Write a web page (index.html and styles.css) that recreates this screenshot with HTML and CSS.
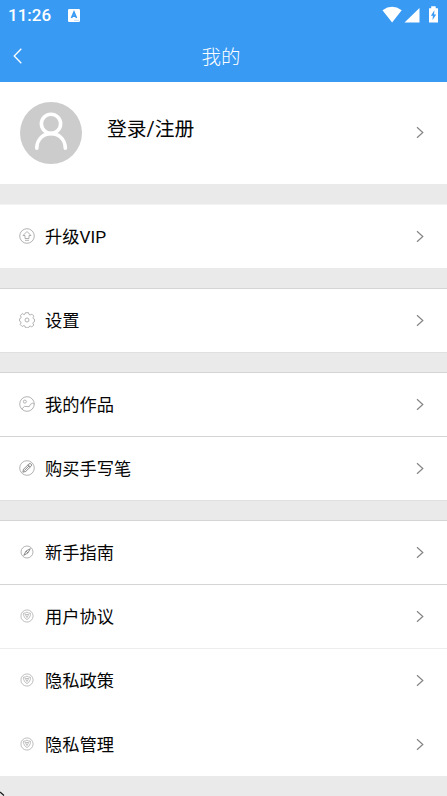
FILE: index.html
```html
<!DOCTYPE html>
<html lang="zh-CN">
<head>
<meta charset="utf-8">
<title>我的</title>
<link rel="stylesheet" href="styles.css">
</head>
<body>
<svg class="defs" width="0" height="0">
  <symbol id="chevron" viewBox="0 0 8 12"><path d="M1 .8 6.800 6 1 11.200"/></symbol>
  <symbol id="shield" viewBox="0 0 16 16"><circle cx="8" cy="8" r="6.100"/><path d="M8 4.100 9.500 5h1.800v2.600Q10.700 10 8 11.600 5.300 10 4.700 7.600V5h1.800z"/><path d="M6.300 6.500h3.400L8 9.500z"/></symbol>
</svg>
<header class="top">
  <div class="status">
    <span class="time">11:26</span>
    <svg class="app" width="12" height="13" viewBox="0 0 12 13"><rect width="12" height="13" rx="1.200" fill="#fff"/><path d="M3.500 9 6 3.200 8.500 9M4.500 7.200h3" fill="none" stroke="#389af3" stroke-width="1.700"/><path d="M6 11.300h5" stroke="#a5d2fa" stroke-width=".7"/></svg>
    <svg class="signals" width="58" height="18" viewBox="0 0 58 18" fill="#fff"><path d="M.5 4.200Q10 -2.700 19.700 4.200L10.100 16.400z"/><path d="M37.500 2v14.500H22.500z"/><path d="M47 2.200h2.200V.2h4.500v2H56v14.300h-9z"/><path d="M52.400 4.300 48.900 9.800h2l-.4 4.200 3.700-5.600h-2.100z" fill="#389af3"/></svg>
  </div>
  <div class="nav">
    <svg class="back" width="10" height="16" viewBox="0 0 10 16"><path d="M8.300 .8 1.200 8 8.300 15.200"/></svg>
    <h1>我的</h1>
  </div>
</header>
<main>
  <section class="profile">
    <svg class="avatar" width="62" height="62" viewBox="0 0 62 62"><circle cx="31" cy="31" r="31" fill="#ccc"/><g fill="none" stroke="#fff" stroke-width="3.600" stroke-linecap="round"><circle cx="31" cy="21.800" r="9.600"/><path d="M16.800 46.200C17 26.800 45 26.800 45.300 46.200"/></g></svg>
    <span class="login">登录/注册</span>
    <svg class="chev"><use href="#chevron"/></svg>
  </section>
  <section class="group">
    <div class="row soft"><svg class="ico" viewBox="0 0 16 16"><circle cx="8" cy="8" r="7.300"/><path d="M8 3.500 12 7.500H10V10.500H6V7.500H4zM6 12.300h4"/></svg><span>升级VIP</span><svg class="chev"><use href="#chevron"/></svg></div>
  </section>
  <section class="group">
    <div class="row"><svg class="ico" viewBox="0 0 16 16"><circle cx="8" cy="8" r="2"/><path d="M6.500.7h3l.5 1.800 1.200.5 1.700-.9 2 2-.9 1.700.4 1 1.100.4v2.500l-1.200.6-.4 1.200.9 1.500-2 2-1.500-.9-1.300.5-.5 1.200h-3L6 14.100l-1.200-.5-1.600.9-2-2 .9-1.600-.5-1.200L.6 9.200V6.700l1.100-.5.5-1.100-.9-1.600 2-1.900 1.500.9L6 2.100z"/></svg><span>设置</span><svg class="chev"><use href="#chevron"/></svg></div>
  </section>
  <section class="group edged">
    <div class="row"><svg class="ico" viewBox="0 0 16 16"><circle cx="8" cy="8" r="7.300"/><circle cx="5.800" cy="5.600" r="1.500"/><path d="M2.800 13Q5.500 9 8 10.500T11.500 8.300Q13.500 6.300 15.200 8"/></svg><span>我的作品</span><svg class="chev"><use href="#chevron"/></svg></div>
    <div class="row"><svg class="ico" viewBox="0 0 16 16"><circle cx="8" cy="8" r="7.300"/><path class="dark" d="M3.800 12.200 4.600 9.200 9.900 3.900Q11.200 3.100 12.300 4.200 13 5.200 12.100 6.200L6.800 11.400zM9 4.800l2.200 2.300M5.300 10.500 10.200 5.800"/></svg><span>购买手写笔</span><svg class="chev"><use href="#chevron"/></svg></div>
  </section>
  <section class="group edged">
    <div class="row"><svg class="ico" viewBox="0 0 16 16"><circle cx="8" cy="8" r="6"/><path class="dark" d="M11.300 4.700 8.900 9 7 7.100zM7 7.100 4.800 11.300 8.900 9"/></svg><span>新手指南</span><svg class="chev"><use href="#chevron"/></svg></div>
    <div class="row"><svg class="ico pale"><use href="#shield"/></svg><span>用户协议</span><svg class="chev"><use href="#chevron"/></svg></div>
    <div class="row faint"><svg class="ico pale"><use href="#shield"/></svg><span>隐私政策</span><svg class="chev"><use href="#chevron"/></svg></div>
    <div class="row plain"><svg class="ico pale"><use href="#shield"/></svg><span>隐私管理</span><svg class="chev"><use href="#chevron"/></svg></div>
  </section>
</main>
<svg class="corner" width="5" height="5" viewBox="0 0 5 5"><path d="M0 1 4 4.500" fill="none" stroke="#111" stroke-width="1.200"/></svg>
</body>
</html>
```
FILE: styles.css
```css
* { box-sizing: border-box; }
body {
  margin: 0;
  height: 796px;
  overflow: hidden;
  position: relative;
  background: #eaeaea;
  color: #050505;
  font-family: Roboto, "Noto Sans CJK SC", sans-serif;
}
.defs { position: absolute; }
svg { flex: none; }
.top { height: 82px; background: #389af3; color: #fff; }
.status { height: 30px; display: flex; align-items: center; padding: 0 7px 0 8px; }
.time { font-size: 17px; font-weight: 500; line-height: 30px; width: 60px; }
.app { margin-top: 1px; }
.signals { margin-left: auto; }
.nav { height: 52px; display: flex; align-items: center; padding: 0 12px 0 13px; }
.back { fill: none; stroke: #fff; stroke-width: 1.3; }
h1 { flex: 1; margin: 3px 16px 0 0; text-align: center; font-size: 19.5px; line-height: 50px; font-weight: 300; }
.profile { height: 102px; background: #fff; display: flex; align-items: center; padding: 0 23px 1px 20px; }
.login { margin: -6px 0 0 25px; font-size: 19.8px; line-height: 30px; }
.chev { width: 8px; height: 13px; margin-left: auto; fill: none; stroke: #858585; stroke-width: 1.2; }
.group { margin-top: 20px; background: #fff; }
.group.edged { border-top: 1px solid #e0e0e0; margin-top: 0; }
.group.edged::before { content: ""; display: block; height: 19px; background: #eaeaea; }
.row {
  height: 64px;
  border-top: 1px solid #d4d4d4;
  display: flex;
  align-items: center;
  padding: 0 23px 1px 19px;
  font-size: 17.25px;
  line-height: 26px;
}
.row span { margin: 1px 0 0 10px; }
.row.plain { border-top-color: #fff; }
.row.soft { border-top-color: #f3f3f3; }
.row.faint { border-top-color: #ececec; }
.ico { width: 16px; height: 16px; fill: none; stroke: #999; stroke-width: .75; }
.ico.pale { stroke: #aaa; }
.ico .dark { stroke: #666; }
.corner { position: absolute; left: 0; bottom: 0; }
```
